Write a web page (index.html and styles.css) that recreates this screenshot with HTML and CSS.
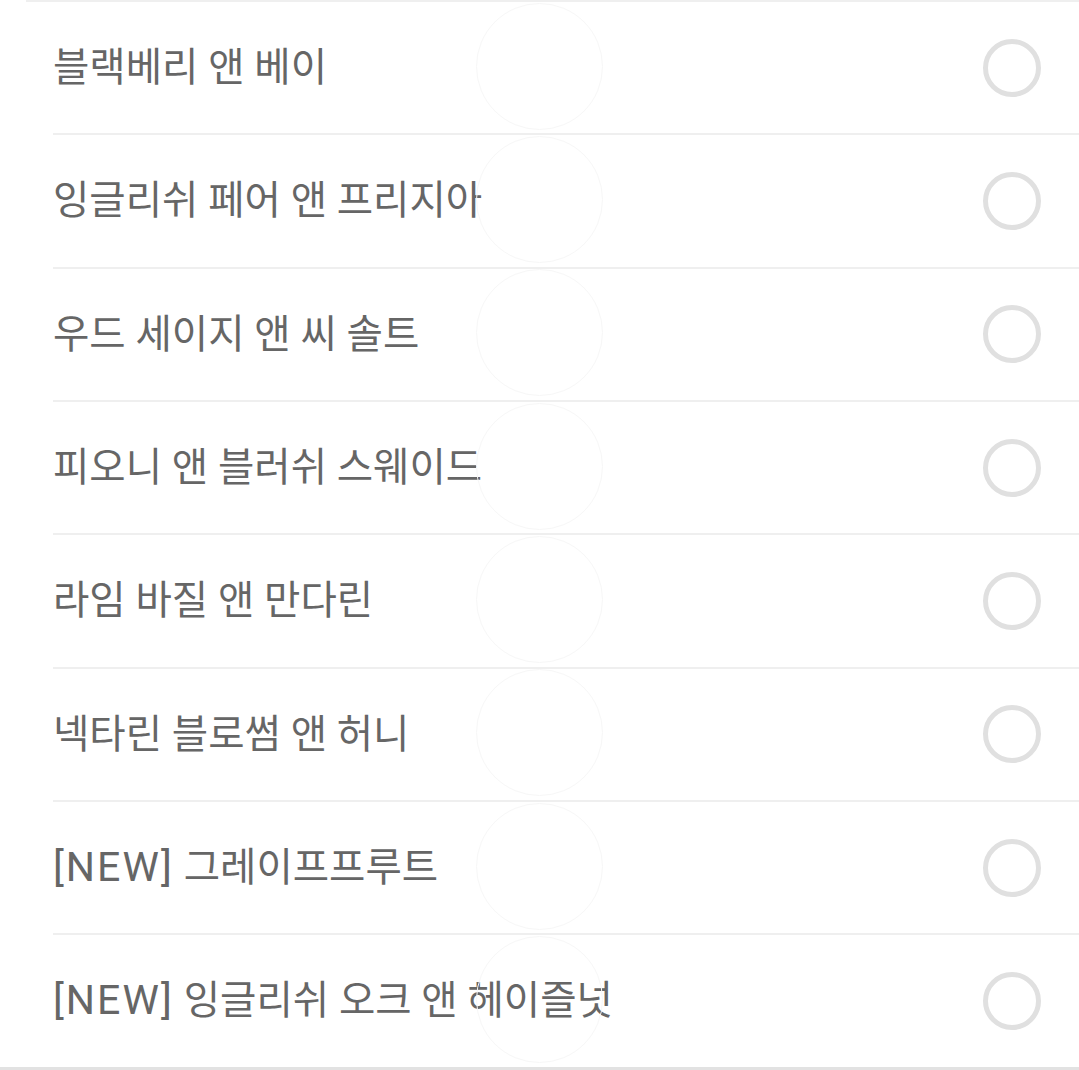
FILE: index.html
```html
<!DOCTYPE html>
<html lang="ko">

<head>
    <meta charset="UTF-8">
    <meta name="viewport" content="width=device-width, initial-scale=1.0">
    <title>향 선택</title>
    <link rel="stylesheet" href="styles.css">
</head>

<body>
    <div class="top-line"></div>
    <ul class="scent-list">
        <li class="scent"><span class="name">블랙베리 앤 베이</span><span class="ripple"></span><span class="radio"></span></li>
        <li class="scent"><span class="name">잉글리쉬 페어 앤 프리지아</span><span class="ripple"></span><span class="radio"></span></li>
        <li class="scent"><span class="name">우드 세이지 앤 씨 솔트</span><span class="ripple"></span><span class="radio"></span></li>
        <li class="scent"><span class="name">피오니 앤 블러쉬 스웨이드</span><span class="ripple"></span><span class="radio"></span></li>
        <li class="scent"><span class="name">라임 바질 앤 만다린</span><span class="ripple"></span><span class="radio"></span></li>
        <li class="scent"><span class="name">넥타린 블로썸 앤 허니</span><span class="ripple"></span><span class="radio"></span></li>
        <li class="scent"><span class="name"><span class="tag">[NEW]</span> 그레이프프루트</span><span class="ripple"></span><span class="radio"></span></li>
        <li class="scent"><span class="name"><span class="tag">[NEW]</span> 잉글리쉬 오크 앤 헤이즐넛</span><span class="ripple"></span><span class="radio"></span></li>
    </ul>
</body>

</html>
```

FILE: styles.css
```css
* {
    margin: 0;
    padding: 0;
    box-sizing: border-box;
}

body {
    background: #fff;
    font-family: Roboto, "Noto Sans CJK KR", sans-serif;
    overflow: hidden;
}

.top-line {
    height: 2px;
    margin-left: 26px;
    background-color: #efefef;
}

.scent-list {
    list-style: none;
    border-bottom: 4px solid #e2e2e2;
}

.scent {
    position: relative;
    display: flex;
    align-items: center;
    justify-content: space-between;
    height: 133.33px;
    margin-left: 53px;
    padding-right: 38px;
    border-bottom: 2px solid #efefef;
}

.scent:last-child {
    height: 131.33px;
    border-bottom: none;
}

.name {
    font-size: 39.5px;
    line-height: 1;
    color: #666;
}

.tag {
    letter-spacing: 2px;
    font-size: 41px;
}

.ripple {
    position: absolute;
    left: 423px;
    top: 50%;
    width: 127px;
    height: 127px;
    margin-top: -65px;
    border: 1px solid #f7f7f7;
    border-radius: 50%;
}

.radio {
    width: 58px;
    height: 58px;
    border: 5px solid #e0e0e0;
    border-radius: 50%;
}
```
